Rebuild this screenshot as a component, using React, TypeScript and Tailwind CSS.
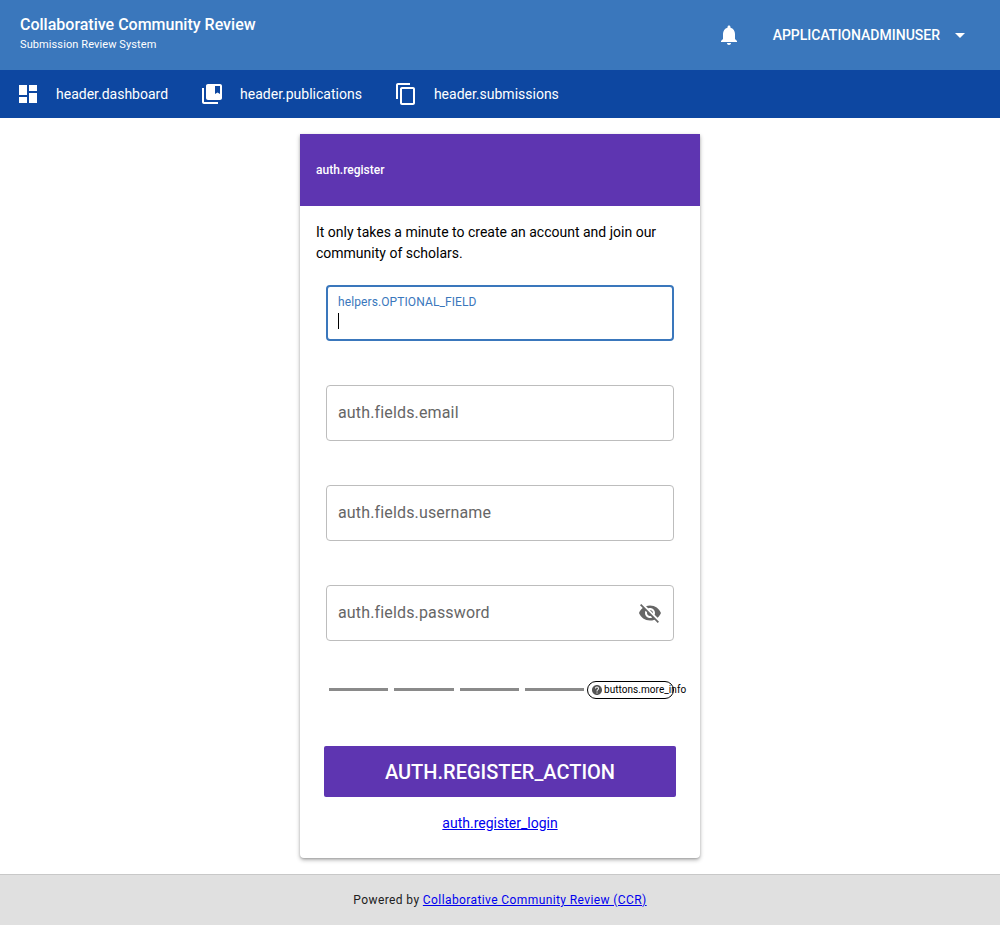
import React from 'react';

const ICONS = {
  dashboard: 'M3 13h8V3H3v10zm0 8h8v-6H3v6zm10 0h8V11h-8v10zm0-18v6h8V3h-8z',
  publications:
    'M4 6H2v14c0 1.1.9 2 2 2h14v-2H4V6zm16-4H8c-1.1 0-2 .9-2 2v12c0 1.1.9 2 2 2h12c1.1 0 2-.9 2-2V4c0-1.1-.9-2-2-2zm0 10l-2.5-1.5L15 12V4h5v8z',
  submissions:
    'M16 1H4c-1.1 0-2 .9-2 2v14h2V3h12V1zm3 4H8c-1.1 0-2 .9-2 2v14c0 1.1.9 2 2 2h11c1.1 0 2-.9 2-2V7c0-1.1-.9-2-2-2zm0 16H8V7h11v14z',
  bell: 'M12 22c1.1 0 2-.9 2-2h-4c0 1.1.89 2 2 2zm6-6v-5c0-3.07-1.64-5.64-4.5-6.32V4c0-.83-.67-1.5-1.5-1.5s-1.5.67-1.5 1.5v.68C7.63 5.36 6 7.92 6 11v5l-2 2v1h16v-1l-2-2z',
  caret: 'M7 10l5 5 5-5z',
  eyeOff:
    'M12 7c2.76 0 5 2.24 5 5 0 .65-.13 1.26-.36 1.83l2.92 2.92c1.51-1.26 2.7-2.89 3.43-4.75-1.73-4.39-6-7.5-11-7.5-1.4 0-2.74.25-3.98.7l2.16 2.16C10.74 7.13 11.35 7 12 7zM2 4.27l2.28 2.28.46.46C3.08 8.3 1.78 10.02 1 12c1.73 4.39 6 7.5 11 7.5 1.55 0 3.03-.3 4.38-.84l.42.42L19.73 22 21 20.73 3.27 3 2 4.27zM7.53 9.8l1.55 1.55c-.05.21-.08.43-.08.65 0 1.66 1.34 3 3 3 .22 0 .44-.03.65-.08l1.55 1.55c-.67.33-1.41.53-2.2.53-2.76 0-5-2.24-5-5 0-.79.2-1.53.53-2.2zm4.31-.78l3.15 3.15.02-.16c0-1.66-1.34-3-3-3l-.17.01z',
  help: 'M12 2C6.48 2 2 6.48 2 12s4.48 10 10 10 10-4.48 10-10S17.52 2 12 2zm1 17h-2v-2h2v2zm2.07-7.75l-.9.92C13.45 12.9 13 13.5 13 15h-2v-.5c0-1.1.45-2.1 1.17-2.83l1.24-1.26c.37-.36.59-.86.59-1.41 0-1.1-.9-2-2-2s-2 .9-2 2H8c0-2.21 1.79-4 4-4s4 1.79 4 4c0 .88-.36 1.68-.93 2.25z',
};

function Icon({ d, className }: { d: string; className?: string }) {
  return (
    <svg viewBox="0 0 24 24" fill="currentColor" className={className}>
      <path d={d} />
    </svg>
  );
}

function NavItem({ icon, label }: { icon: string; label: string }) {
  return (
    <div className="flex items-center h-12 px-4 gap-4 text-white">
      <Icon d={icon} className="w-6 h-6" />
      <span className="text-[14px]">{label}</span>
    </div>
  );
}

function Field({ label, className, children }: { label: string; className: string; children?: React.ReactNode }) {
  return (
    <div className={`h-14 rounded border border-[#bdbdbd] flex items-center justify-between px-[11px] ${className}`}>
      <span className="text-[16px] text-[#666666] tracking-[0.15px]">{label}</span>
      {children}
    </div>
  );
}

export default function App() {
  return (
    <div className="min-h-screen flex flex-col bg-white font-['Roboto',sans-serif]">
      {/* Header */}
      <header className="h-[70px] bg-[#3a77bc] flex items-center justify-between pl-5 pr-7 text-white">
        <div className="mb-1">
          <div className="text-[16px] font-medium leading-6">Collaborative Community Review</div>
          <div className="text-[11px] leading-4 tracking-[0.1px]">Submission Review System</div>
        </div>
        <div className="flex items-center">
          <Icon d={ICONS.bell} className="w-6 h-6 mr-8" />
          <span className="text-[14px] font-medium">APPLICATIONADMINUSER</span>
          <Icon d={ICONS.caret} className="w-6 h-6 ml-2" />
        </div>
      </header>

      {/* Nav */}
      <nav className="h-12 bg-[#0d47a1] flex">
        <NavItem icon={ICONS.dashboard} label="header.dashboard" />
        <NavItem icon={ICONS.publications} label="header.publications" />
        <NavItem icon={ICONS.submissions} label="header.submissions" />
      </nav>

      {/* Main */}
      <main className="flex-1 flex justify-center py-4">
        <div className="w-[400px] h-[724px] bg-white rounded-b shadow-[0_2px_4px_rgba(0,0,0,0.3),0_1px_2px_rgba(0,0,0,0.15)]">
          <div className="h-[72px] bg-[#5e35b1] flex items-center px-4 text-white text-[12px] font-medium">
            auth.register
          </div>
          <p className="px-4 pt-4 text-[14px] leading-[21px] text-black">
            It only takes a minute to create an account and join our community of scholars.
          </p>

          <div className="px-[26px] pt-[21px]">
            <div className="h-14 mb-11 rounded border-2 border-[#3a77bc] pl-[10px] pt-[7px]">
              <div className="text-[12px] leading-4 text-[#3a77bc] tracking-[0.1px]">helpers.OPTIONAL_FIELD</div>
              <div className="w-px h-4 bg-black mt-[3px]" />
            </div>
            <Field label="auth.fields.email" className="mb-11" />
            <Field label="auth.fields.username" className="mb-11" />
            <Field label="auth.fields.password" className="mb-[40px]">
              <Icon d={ICONS.eyeOff} className="w-6 h-6 text-[#666666]" />
            </Field>

            {/* Password strength */}
            <div className="flex items-start h-[18px] pl-[3px]">
              <div className="w-[59px] h-[3px] mt-[7px] bg-[#8a8a8a]" />
              <div className="w-[60px] h-[3px] mt-[7px] bg-[#8a8a8a] ml-[6px]" />
              <div className="w-[59px] h-[3px] mt-[7px] bg-[#8a8a8a] ml-[6px]" />
              <div className="w-[59px] h-[3px] mt-[7px] bg-[#8a8a8a] ml-[6px]" />
              <div className="w-[87px] h-[18px] ml-[3px] rounded-full border border-black flex items-center pl-[3px] shrink-0 whitespace-nowrap">
                <Icon d={ICONS.help} className="w-3 h-3 text-[#555555] shrink-0" />
                <span className="text-[10px] text-black ml-[1px] -mt-px tracking-[0.05px]">buttons.more_info</span>
              </div>
            </div>
          </div>

          <div className="px-6 pt-[47px]">
            <button className="w-full h-[51px] bg-[#5e35b1] rounded-[2px] text-white text-[20px] font-medium">
              AUTH.REGISTER_ACTION
            </button>
          </div>
          <div className="text-center mt-[17px] text-[14px] leading-[18px]">
            <a href="#" className="text-[#0000ee] underline">auth.register_login</a>
          </div>
        </div>
      </main>

      {/* Footer */}
      <footer className="h-[51px] bg-[#e0e0e0] border-t border-[#c8c8c8] flex items-center justify-center text-[12px] tracking-[0.4px] text-[#212121]">
        <span>
          Powered by <a href="#" className="text-[#0000ee] underline">Collaborative Community Review (CCR)</a>
        </span>
      </footer>
    </div>
  );
}
